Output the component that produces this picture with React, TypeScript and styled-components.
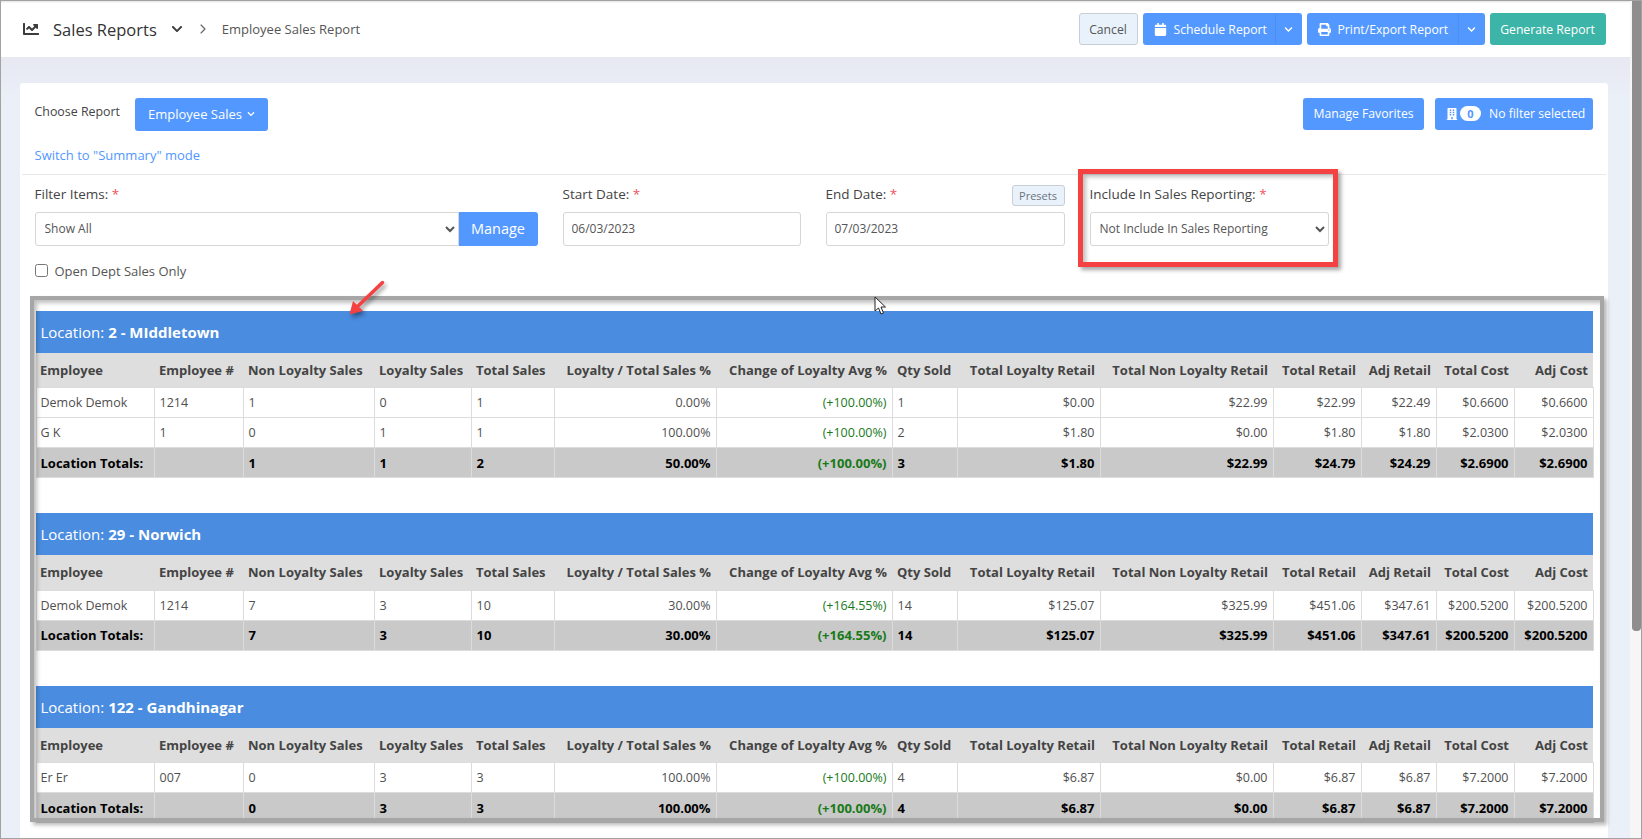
import React from "react";
import styled, { createGlobalStyle } from "styled-components";
import { FaBuilding, FaCalendar, FaChartLine, FaChevronDown, FaPrint } from "react-icons/fa";
import { ChevronRight } from "lucide-react";

const GlobalStyle = createGlobalStyle`
  * { box-sizing: border-box; }
  html, body { margin: 0; padding: 0; height: 100%; overflow: hidden; background: #fff; }
  body { font-family: "Open Sans", "Noto Sans", sans-serif; font-size: 13px; color: #444; }
`;

const Shell = styled.div`
  position: relative;
  display: flex;
  width: 1642px;
  height: 839px;
  overflow: hidden;
  border: 1.5px solid #a2a2a2;
`;

const Main = styled.div`
  flex: 1;
  min-width: 0;
  display: flex;
  flex-direction: column;
`;

const ScrollRail = styled.div`
  width: 11px;
  padding-left: 2px;
  background: #f6f6f6;
`;

const ScrollThumb = styled.div`
  height: 630px;
  background: #8e8e8e;
  border-radius: 0 0 4px 4px;
`;

const Header = styled.header`
  flex: none;
  height: 55.5px;
  display: flex;
  align-items: center;
  padding: 1px 24.5px 0 22px;
  background: #fff;
  box-shadow: inset 0 3px 2px -2px rgba(0, 0, 0, 0.12);
`;

const Crumbs = styled.div`
  flex: 1;
  display: flex;
  align-items: center;
  color: #3c3c3c;
`;

const Title = styled.span`
  margin-left: 14px;
  font-size: 16.5px;
  color: #333;
`;

const CrumbPage = styled.span`
  margin-left: 11px;
  font-size: 13px;
  color: #555;
`;

const Actions = styled.div`
  display: flex;
  gap: 5px;
`;

const Button = styled.button<{ $tone?: "blue" | "teal" | "light"; $width?: number }>`
  display: inline-flex;
  align-items: center;
  justify-content: center;
  flex: none;
  height: 32px;
  width: ${(p) => (p.$width ? `${p.$width}px` : "auto")};
  padding: 0;
  white-space: nowrap;
  font: 12.2px "Open Sans", sans-serif;
  border-radius: 3px;
  border: 1px solid ${(p) => (p.$tone === "light" ? "#c8ced6" : "transparent")};
  color: ${(p) => (p.$tone === "light" ? "#555" : "#fff")};
  background: ${(p) => (p.$tone === "light" ? "#e9f2fb" : p.$tone === "teal" ? "#3cb4a7" : "#5398ff")};
`;

const SplitMain = styled(Button)`
  justify-content: flex-start;
  padding-left: 10px;
  border-radius: 3px 0 0 3px;
  gap: 7px;
`;

const SplitCaret = styled(Button)`
  width: 27px;
  border-radius: 0 3px 3px 0;
  border-left: 1px solid #4d90f2;
`;

const Split = styled.div`
  display: flex;
`;

const Body = styled.main`
  flex: 1;
  min-height: 0;
  padding: 26px 22px 0 18.5px;
  background: linear-gradient(#e6e8f2, #ebeff8 40px);
`;

const Card = styled.section`
  height: 100%;
  overflow: hidden;
  background: #fff;
  border-radius: 3px 3px 0 0;
`;

const TopPart = styled.div`
  height: 92px;
  margin: 0 2px;
  padding: 15px 13px 0 13px;
  border-bottom: 1px solid #e8e8e8;
`;

const ChooseRow = styled.div`
  display: flex;
  align-items: flex-start;
`;

const ChooseLabel = styled.span`
  margin-top: 5px;
  font-size: 12.4px;
  color: #444;
`;

const ReportButton = styled(Button)`
  height: 33px;
  margin-left: 15px;
  gap: 5px;
  font-size: 13px;
`;

const RightTools = styled.div`
  display: flex;
  gap: 11px;
  margin-left: auto;
`;

const FilterButton = styled(Button)`
  justify-content: flex-start;
  padding-left: 10px;
`;

const CountBadge = styled.span`
  width: 21px;
  height: 15px;
  margin: 0 8px 0 2px;
  display: inline-flex;
  align-items: center;
  justify-content: center;
  border-radius: 8px;
  background: #fff;
  color: #5398ff;
  font-size: 11px;
  font-weight: 700;
`;

const ModeLink = styled.a`
  display: block;
  margin-top: 15px;
  font-size: 13px;
  color: #5398ff;
`;

const FilterGrid = styled.div`
  display: grid;
  grid-template-columns: 503px 238px 239px 239px;
  column-gap: 25px;
  padding: 10px 0 0 15px;
`;

const Field = styled.div`
  display: flex;
  flex-direction: column;
`;

const LabelRow = styled.div`
  height: 27px;
  display: flex;
  align-items: flex-start;
  justify-content: space-between;
`;

const Label = styled.label`
  font-size: 13.5px;
  line-height: 18px;
  font-weight: 500;
  color: #444;
`;

const Star = styled.span`
  color: #f0525e;
`;

const PresetsButton = styled(Button)`
  height: 21px;
  width: 53px;
  font-size: 11px;
  color: #6b7280;
`;

const InputGroup = styled.div`
  display: flex;
`;

const Select = styled.select`
  flex: 1;
  width: 100%;
  height: 34px;
  padding: 0 5px;
  font: 12px "Open Sans", sans-serif;
  color: #555;
  background: #fff;
  border: 1px solid #d6d6d6;
  border-radius: 3px;
`;

const GroupSelect = styled(Select)`
  border-radius: 3px 0 0 3px;
`;

const ManageButton = styled(Button)`
  width: 79px;
  height: 34px;
  font-size: 14.5px;
  border-radius: 0 3px 3px 0;
`;

const DateInput = styled.input`
  width: 100%;
  height: 34px;
  padding: 0 8px;
  font: 12px "Open Sans", sans-serif;
  color: #555;
  border: 1px solid #d6d6d6;
  border-radius: 3px;
`;

const CheckRow = styled.label`
  display: flex;
  align-items: center;
  gap: 7px;
  margin: 18px 0 0 15px;
  height: 14px;
  font-size: 13px;
  color: #555;
`;

const CheckBox = styled.input`
  width: 13px;
  height: 13px;
  margin: 0;
`;

const Report = styled.div`
  padding: 33px 0 0 16px;
  width: 1573px;
`;

const LocationBlock = styled.div`
  margin-bottom: 35px;
`;

const LocationTitle = styled.div`
  height: 42px;
  padding-left: 5px;
  display: flex;
  align-items: center;
  gap: 4px;
  background: #4a8cdf;
  color: #fff;
  font-size: 15px;
`;

const ReportTable = styled.table`
  width: 1557px;
  table-layout: fixed;
  border-collapse: collapse;
`;

const HeadRow = styled.tr`
  height: 35px;
  background: #dedede;
`;

const BodyRow = styled.tr`
  height: 30px;
  background: #fff;
`;

const TotalRow = styled.tr`
  height: 30px;
  background: #c9c9c9;
`;

const HeadCell = styled.th<{ $right?: boolean }>`
  padding: 0 5px;
  font-size: 13px;
  font-weight: 700;
  color: #444;
  white-space: nowrap;
  text-align: ${(p) => (p.$right ? "right" : "left")};
  &:first-child { padding-left: 4px; }
`;

const Cell = styled.td<{ $right?: boolean; $bold?: boolean; $green?: boolean }>`
  padding: 0 5px;
  font-size: ${(p) => (p.$bold ? "13px" : "12.5px")};
  white-space: nowrap;
  border: 1px solid #dcdcdc;
  font-weight: ${(p) => (p.$bold ? 700 : 400)};
  color: ${(p) => (p.$green ? "#187a18" : p.$bold ? "#000" : "#4f4f4f")};
  text-align: ${(p) => (p.$right ? "right" : "left")};
  &:first-child { padding-left: 4px; }
`;

const GrayFrame = styled.div`
  position: absolute;
  left: 29px;
  top: 294.5px;
  width: 1574px;
  height: 526px;
  border: 4px solid #a6a6a6;
  box-shadow: 3px 3px 4px rgba(0, 0, 0, 0.28), inset 3px 3px 4px rgba(0, 0, 0, 0.25);
  pointer-events: none;
`;

const RedBox = styled.div`
  position: absolute;
  left: 1076.5px;
  top: 167.5px;
  width: 260px;
  height: 98px;
  border: 5px solid #f44141;
  box-shadow: 3px 3px 4px rgba(0, 0, 0, 0.35), inset 3px 3px 4px rgba(0, 0, 0, 0.25);
  pointer-events: none;
`;

const ArrowMark = styled.svg`
  position: absolute;
  left: 338.5px;
  top: 268.5px;
  width: 50px;
  height: 50px;
  overflow: visible;
  filter: drop-shadow(2px 3px 2px rgba(0, 0, 0, 0.4));
`;

const CursorMark = styled.svg`
  position: absolute;
  left: 872.5px;
  top: 294.5px;
  width: 14px;
  height: 20px;
`;

const COLUMN_WIDTHS = [118, 89, 131, 97, 83, 162, 176, 65, 143, 173, 88, 75, 78, 79];

const COLUMNS: { name: string; right?: boolean }[] = [
  { name: "Employee" },
  { name: "Employee #" },
  { name: "Non Loyalty Sales" },
  { name: "Loyalty Sales" },
  { name: "Total Sales" },
  { name: "Loyalty / Total Sales %", right: true },
  { name: "Change of Loyalty Avg %", right: true },
  { name: "Qty Sold" },
  { name: "Total Loyalty Retail", right: true },
  { name: "Total Non Loyalty Retail", right: true },
  { name: "Total Retail", right: true },
  { name: "Adj Retail", right: true },
  { name: "Total Cost", right: true },
  { name: "Adj Cost", right: true },
];

const LOCATIONS = [
  {
    name: "2 - MIddletown",
    rows: [
      ["Demok Demok", "1214", "1", "0", "1", "0.00%", "(+100.00%)", "1", "$0.00", "$22.99", "$22.99", "$22.49", "$0.6600", "$0.6600"],
      ["G K", "1", "0", "1", "1", "100.00%", "(+100.00%)", "2", "$1.80", "$0.00", "$1.80", "$1.80", "$2.0300", "$2.0300"],
    ],
    totals: ["Location Totals:", "", "1", "1", "2", "50.00%", "(+100.00%)", "3", "$1.80", "$22.99", "$24.79", "$24.29", "$2.6900", "$2.6900"],
  },
  {
    name: "29 - Norwich",
    rows: [
      ["Demok Demok", "1214", "7", "3", "10", "30.00%", "(+164.55%)", "14", "$125.07", "$325.99", "$451.06", "$347.61", "$200.5200", "$200.5200"],
    ],
    totals: ["Location Totals:", "", "7", "3", "10", "30.00%", "(+164.55%)", "14", "$125.07", "$325.99", "$451.06", "$347.61", "$200.5200", "$200.5200"],
  },
  {
    name: "122 - Gandhinagar",
    rows: [
      ["Er Er", "007", "0", "3", "3", "100.00%", "(+100.00%)", "4", "$6.87", "$0.00", "$6.87", "$6.87", "$7.2000", "$7.2000"],
    ],
    totals: ["Location Totals:", "", "0", "3", "3", "100.00%", "(+100.00%)", "4", "$6.87", "$0.00", "$6.87", "$6.87", "$7.2000", "$7.2000"],
  },
];

function LocationSection({ location }: { location: (typeof LOCATIONS)[number] }) {
  return (
    <LocationBlock>
      <LocationTitle>
        <span>Location:</span>
        <strong>{location.name}</strong>
      </LocationTitle>
      <ReportTable>
        <colgroup>
          {COLUMN_WIDTHS.map((w, i) => (
            <col key={i} width={w} />
          ))}
        </colgroup>
        <thead>
          <HeadRow>
            {COLUMNS.map((c) => (
              <HeadCell key={c.name} $right={c.right}>{c.name}</HeadCell>
            ))}
          </HeadRow>
        </thead>
        <tbody>
          {location.rows.map((row, r) => (
            <BodyRow key={r}>
              {row.map((v, i) => (
                <Cell key={i} $right={COLUMNS[i].right} $green={i === 6}>{v}</Cell>
              ))}
            </BodyRow>
          ))}
          <TotalRow>
            {location.totals.map((v, i) => (
              <Cell key={i} $right={COLUMNS[i].right} $bold $green={i === 6}>{v}</Cell>
            ))}
          </TotalRow>
        </tbody>
      </ReportTable>
    </LocationBlock>
  );
}

export default function App() {
  return (
    <Shell>
      <GlobalStyle />
      <Main>
        <Header>
          <Crumbs>
            <FaChartLine size={16} />
            <Title>Sales Reports</Title>
            <FaChevronDown size={12} style={{ marginLeft: 14 }} />
            <ChevronRight size={16} color="#666" strokeWidth={1.75} style={{ marginLeft: 12 }} />
            <CrumbPage>Employee Sales Report</CrumbPage>
          </Crumbs>
          <Actions>
            <Button $tone="light" $width={59}>Cancel</Button>
            <Split>
              <SplitMain $width={132}>
                <FaCalendar size={13} />
                Schedule Report
              </SplitMain>
              <SplitCaret><FaChevronDown size={9} /></SplitCaret>
            </Split>
            <Split>
              <SplitMain $width={151}>
                <FaPrint size={13} />
                Print/Export Report
              </SplitMain>
              <SplitCaret><FaChevronDown size={9} /></SplitCaret>
            </Split>
            <Button $tone="teal" $width={116}>Generate Report</Button>
          </Actions>
        </Header>
        <Body>
          <Card>
            <TopPart>
              <ChooseRow>
                <ChooseLabel>Choose Report</ChooseLabel>
                <ReportButton $width={133}>
                  Employee Sales
                  <FaChevronDown size={8} />
                </ReportButton>
                <RightTools>
                  <Button $width={121}>Manage Favorites</Button>
                  <FilterButton $width={158}>
                    <FaBuilding size={12} />
                    <CountBadge>0</CountBadge>
                    No filter selected
                  </FilterButton>
                </RightTools>
              </ChooseRow>
              <ModeLink>Switch to "Summary" mode</ModeLink>
            </TopPart>
            <FilterGrid>
              <Field>
                <LabelRow>
                  <Label>Filter Items: <Star>*</Star></Label>
                </LabelRow>
                <InputGroup>
                  <GroupSelect defaultValue="all">
                    <option value="all">Show All</option>
                  </GroupSelect>
                  <ManageButton>Manage</ManageButton>
                </InputGroup>
              </Field>
              <Field>
                <LabelRow>
                  <Label>Start Date: <Star>*</Star></Label>
                </LabelRow>
                <DateInput readOnly value="06/03/2023" />
              </Field>
              <Field>
                <LabelRow>
                  <Label>End Date: <Star>*</Star></Label>
                  <PresetsButton $tone="light">Presets</PresetsButton>
                </LabelRow>
                <DateInput readOnly value="07/03/2023" />
              </Field>
              <Field>
                <LabelRow>
                  <Label>Include In Sales Reporting: <Star>*</Star></Label>
                </LabelRow>
                <Select defaultValue="no">
                  <option value="no">Not Include In Sales Reporting</option>
                </Select>
              </Field>
            </FilterGrid>
            <CheckRow>
              <CheckBox type="checkbox" />
              Open Dept Sales Only
            </CheckRow>
            <Report>
              {LOCATIONS.map((l) => (
                <LocationSection key={l.name} location={l} />
              ))}
            </Report>
          </Card>
        </Body>
      </Main>
      <ScrollRail>
        <ScrollThumb />
      </ScrollRail>
      <RedBox />
      <GrayFrame />
      <ArrowMark viewBox="0 0 50 50">
        <path d="M42.5 12.5 L16 38" stroke="#f44141" strokeWidth="3.5" strokeLinecap="round" />
        <path d="M9.5 44.5 L13 31 L23 41 Z" fill="#f44141" />
      </ArrowMark>
      <CursorMark viewBox="0 0 14 20">
        <path d="M1 1 V15 L4.5 12 L7 18 L9.5 17 L7 11 H11.5 Z" fill="#fff" stroke="#222" strokeWidth="1" />
      </CursorMark>
    </Shell>
  );
}
